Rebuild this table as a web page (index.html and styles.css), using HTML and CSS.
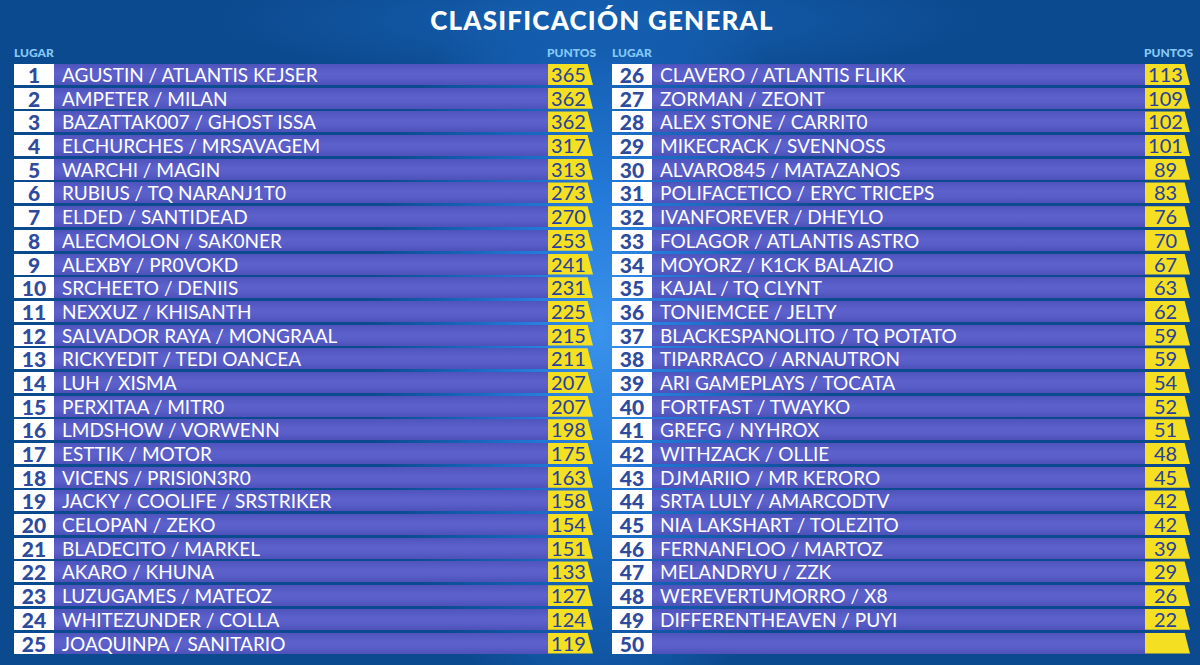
FILE: index.html
```html
<!DOCTYPE html>
<html lang="es">
<head>
<meta charset="utf-8">
<title>Clasificación General</title>
<link rel="stylesheet" href="styles.css">
</head>
<body>
<main class="page">
  <h1 class="title">CLASIFICACIÓN GENERAL</h1>
  <div class="board">
    <section class="col">
      <div class="col-head"><span>LUGAR</span><span class="pts-head">PUNTOS</span></div>
      <ol class="rows">
        <li class="row"><span class="pos">1</span><span class="name">AGUSTIN / ATLANTIS KEJSER</span><span class="pts">365</span></li>
        <li class="row"><span class="pos">2</span><span class="name">AMPETER / MILAN</span><span class="pts">362</span></li>
        <li class="row"><span class="pos">3</span><span class="name">BAZATTAK007 / GHOST ISSA</span><span class="pts">362</span></li>
        <li class="row"><span class="pos">4</span><span class="name">ELCHURCHES / MRSAVAGEM</span><span class="pts">317</span></li>
        <li class="row"><span class="pos">5</span><span class="name">WARCHI / MAGIN</span><span class="pts">313</span></li>
        <li class="row"><span class="pos">6</span><span class="name">RUBIUS / TQ NARANJ1T0</span><span class="pts">273</span></li>
        <li class="row"><span class="pos">7</span><span class="name">ELDED / SANTIDEAD</span><span class="pts">270</span></li>
        <li class="row"><span class="pos">8</span><span class="name">ALECMOLON / SAK0NER</span><span class="pts">253</span></li>
        <li class="row"><span class="pos">9</span><span class="name">ALEXBY / PR0VOKD</span><span class="pts">241</span></li>
        <li class="row"><span class="pos">10</span><span class="name">SRCHEETO / DENIIS</span><span class="pts">231</span></li>
        <li class="row"><span class="pos">11</span><span class="name">NEXXUZ / KHISANTH</span><span class="pts">225</span></li>
        <li class="row"><span class="pos">12</span><span class="name">SALVADOR RAYA / MONGRAAL</span><span class="pts">215</span></li>
        <li class="row"><span class="pos">13</span><span class="name">RICKYEDIT / TEDI OANCEA</span><span class="pts">211</span></li>
        <li class="row"><span class="pos">14</span><span class="name">LUH / XISMA</span><span class="pts">207</span></li>
        <li class="row"><span class="pos">15</span><span class="name">PERXITAA / MITR0</span><span class="pts">207</span></li>
        <li class="row"><span class="pos">16</span><span class="name">LMDSHOW / VORWENN</span><span class="pts">198</span></li>
        <li class="row"><span class="pos">17</span><span class="name">ESTTIK / MOTOR</span><span class="pts">175</span></li>
        <li class="row"><span class="pos">18</span><span class="name">VICENS / PRISI0N3R0</span><span class="pts">163</span></li>
        <li class="row"><span class="pos">19</span><span class="name">JACKY / COOLIFE / SRSTRIKER</span><span class="pts">158</span></li>
        <li class="row"><span class="pos">20</span><span class="name">CELOPAN / ZEKO</span><span class="pts">154</span></li>
        <li class="row"><span class="pos">21</span><span class="name">BLADECITO / MARKEL</span><span class="pts">151</span></li>
        <li class="row"><span class="pos">22</span><span class="name">AKARO / KHUNA</span><span class="pts">133</span></li>
        <li class="row"><span class="pos">23</span><span class="name">LUZUGAMES / MATEOZ</span><span class="pts">127</span></li>
        <li class="row"><span class="pos">24</span><span class="name">WHITEZUNDER / COLLA</span><span class="pts">124</span></li>
        <li class="row"><span class="pos">25</span><span class="name">JOAQUINPA / SANITARIO</span><span class="pts">119</span></li>
      </ol>
    </section>
    <section class="col">
      <div class="col-head"><span>LUGAR</span><span class="pts-head">PUNTOS</span></div>
      <ol class="rows">
        <li class="row"><span class="pos">26</span><span class="name">CLAVERO / ATLANTIS FLIKK</span><span class="pts">113</span></li>
        <li class="row"><span class="pos">27</span><span class="name">ZORMAN / ZEONT</span><span class="pts">109</span></li>
        <li class="row"><span class="pos">28</span><span class="name">ALEX STONE / CARRIT0</span><span class="pts">102</span></li>
        <li class="row"><span class="pos">29</span><span class="name">MIKECRACK / SVENNOSS</span><span class="pts">101</span></li>
        <li class="row"><span class="pos">30</span><span class="name">ALVARO845 / MATAZANOS</span><span class="pts">89</span></li>
        <li class="row"><span class="pos">31</span><span class="name">POLIFACETICO / ERYC TRICEPS</span><span class="pts">83</span></li>
        <li class="row"><span class="pos">32</span><span class="name">IVANFOREVER / DHEYLO</span><span class="pts">76</span></li>
        <li class="row"><span class="pos">33</span><span class="name">FOLAGOR / ATLANTIS ASTRO</span><span class="pts">70</span></li>
        <li class="row"><span class="pos">34</span><span class="name">MOYORZ / K1CK BALAZIO</span><span class="pts">67</span></li>
        <li class="row"><span class="pos">35</span><span class="name">KAJAL / TQ CLYNT</span><span class="pts">63</span></li>
        <li class="row"><span class="pos">36</span><span class="name">TONIEMCEE / JELTY</span><span class="pts">62</span></li>
        <li class="row"><span class="pos">37</span><span class="name">BLACKESPANOLITO / TQ POTATO</span><span class="pts">59</span></li>
        <li class="row"><span class="pos">38</span><span class="name">TIPARRACO / ARNAUTRON</span><span class="pts">59</span></li>
        <li class="row"><span class="pos">39</span><span class="name">ARI GAMEPLAYS / TOCATA</span><span class="pts">54</span></li>
        <li class="row"><span class="pos">40</span><span class="name">FORTFAST / TWAYKO</span><span class="pts">52</span></li>
        <li class="row"><span class="pos">41</span><span class="name">GREFG / NYHROX</span><span class="pts">51</span></li>
        <li class="row"><span class="pos">42</span><span class="name">WITHZACK / OLLIE</span><span class="pts">48</span></li>
        <li class="row"><span class="pos">43</span><span class="name">DJMARIIO / MR KERORO</span><span class="pts">45</span></li>
        <li class="row"><span class="pos">44</span><span class="name">SRTA LULY / AMARCODTV</span><span class="pts">42</span></li>
        <li class="row"><span class="pos">45</span><span class="name">NIA LAKSHART / TOLEZITO</span><span class="pts">42</span></li>
        <li class="row"><span class="pos">46</span><span class="name">FERNANFLOO / MARTOZ</span><span class="pts">39</span></li>
        <li class="row"><span class="pos">47</span><span class="name">MELANDRYU / ZZK</span><span class="pts">29</span></li>
        <li class="row"><span class="pos">48</span><span class="name">WEREVERTUMORRO / X8</span><span class="pts">26</span></li>
        <li class="row"><span class="pos">49</span><span class="name">DIFFERENTHEAVEN / PUYI</span><span class="pts">22</span></li>
        <li class="row"><span class="pos">50</span><span class="name"></span><span class="pts"></span></li>
      </ol>
    </section>
  </div>
</main>
</body>
</html>
```

FILE: styles.css
```css
* { box-sizing: border-box; }

html, body {
  margin: 0;
  padding: 0;
}

body {
  width: 1200px;
  height: 665px;
  overflow: hidden;
  background:
    radial-gradient(ellipse 230px 400px at 600px 330px, #3a93ec 0%, #2379d8 35%, #145eb0 70%, rgba(12, 74, 143, 0) 100%),
    radial-gradient(ellipse 380px 60px at 600px 20px, #1660b2 0%, rgba(12, 74, 143, 0) 100%),
    #0c4a8f;
  font-family: "Lato", "Liberation Sans", sans-serif;
}

.page {
  padding: 0 10px 0 14px;
}

.title {
  margin: 0;
  height: 42px;
  padding-top: 6px;
  text-align: center;
  color: #ffffff;
  font-family: "Lato", sans-serif;
  font-weight: 900;
  font-size: 26px;
  line-height: 28px;
  letter-spacing: 1.2px;
}

.board {
  display: grid;
  grid-template-columns: 579px 578px;
  column-gap: 19px;
}

.col-head {
  display: flex;
  justify-content: space-between;
  height: 22px;
  padding-top: 4px;
  color: #86c8f6;
  font-weight: 900;
  font-size: 12px;
  line-height: 13px;
}

.pts-head {
  width: 46px;
  text-align: center;
}

.rows {
  list-style: none;
  margin: 0;
  padding: 0;
  display: grid;
  row-gap: 2.7px;
}

.row {
  display: grid;
  grid-template-columns: 40px 1fr 45px;
  height: 21px;
}

.pos {
  background: #ffffff;
  color: #2f4b9c;
  font-weight: 900;
  font-size: 21px;
  line-height: 21px;
  text-align: center;
}

.name {
  background: linear-gradient(180deg, #4f54bd 0%, #5c61cc 45%, #585dc8 70%, #4d51b8 100%);
  color: #ffffff;
  font-size: 19px;
  line-height: 21px;
  padding-left: 8px;
  white-space: nowrap;
}

.pts {
  background: #f4df22;
  color: #27409a;
  font-size: 20px;
  line-height: 21px;
  text-align: center;
  padding-right: 4px;
  clip-path: polygon(0 0, 88% 0, 100% 100%, 0 100%);
}
```
